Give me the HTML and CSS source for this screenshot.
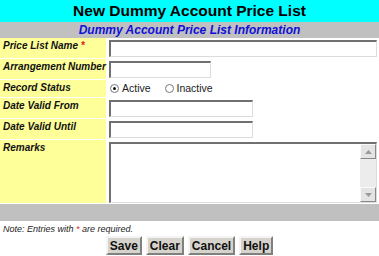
FILE: index.html
```html
<!DOCTYPE html>
<html>
<head>
<meta charset="utf-8">
<link rel="stylesheet" href="styles.css">
</head>
<body>
<div class="page">
  <div class="title">New Dummy Account Price List</div>
  <div class="subtitle">Dummy Account Price List Information</div>
  <table class="form">
    <tr class="r1">
      <th>Price List Name <span class="req">*</span></th>
      <td><input class="txt wide" type="text"></td>
    </tr>
    <tr class="r2">
      <th>Arrangement Number</th>
      <td><input class="txt short" type="text"></td>
    </tr>
    <tr class="r3">
      <th>Record Status</th>
      <td class="radios">
        <span class="radio on"></span><span class="rlabel">Active</span>
        <span class="radio"></span><span class="rlabel">Inactive</span>
      </td>
    </tr>
    <tr class="r4">
      <th>Date Valid From</th>
      <td><input class="txt mid" type="text"></td>
    </tr>
    <tr class="r5">
      <th>Date Valid Until</th>
      <td><input class="txt mid" type="text"></td>
    </tr>
    <tr class="r6">
      <th>Remarks</th>
      <td>
        <div class="area">
          <div class="sb">
            <div class="sbbtn"><svg width="7" height="4" viewBox="0 0 7 4"><path d="M3.5 0 L7 4 L0 4 Z" fill="#9a9a9a"/></svg></div>
            <div class="sbtrack"></div>
            <div class="sbbtn"><svg width="7" height="4" viewBox="0 0 7 4"><path d="M0 0 L7 0 L3.5 4 Z" fill="#9a9a9a"/></svg></div>
          </div>
        </div>
      </td>
    </tr>
  </table>
  <div class="footbar"></div>
  <div class="note">Note: Entries with <span class="req">*</span> are required.</div>
  <div class="buttons">
    <button class="btn">Save</button>
    <button class="btn">Clear</button>
    <button class="btn">Cancel</button>
    <button class="btn">Help</button>
  </div>
</div>
</body>
</html>
```
FILE: styles.css
```css
html, body {
  margin: 0;
  padding: 0;
  background: #fff;
}
.page {
  width: 379px;
  font-family: "Liberation Sans", Arial, sans-serif;
}
.title {
  background: #00ffff;
  height: 22px;
  line-height: 22px;
  text-align: center;
  font-weight: bold;
  font-size: 15.5px;
  color: #000;
}
.subtitle {
  background: #c0c0c0;
  height: 16px;
  line-height: 16px;
  text-align: center;
  font-weight: bold;
  font-style: italic;
  font-size: 12px;
  color: #1010d8;
}
.form {
  width: 100%;
  border-collapse: separate;
  border-spacing: 0 1px;
  margin: -1px 0 0 0;
}
.form th {
  background: #ffff99;
  width: 103px;
  padding: 1px 0 0 3px;
  text-align: left;
  vertical-align: top;
  font-size: 10px;
  font-weight: bold;
  font-style: italic;
  color: #111;
  white-space: nowrap;
  line-height: 14px;
}
.form td {
  padding: 0 0 0 3px;
  vertical-align: top;
}
.req {
  color: #e02020;
}
.r1, .r2 { height: 20px; }
.r3 { height: 17px; }
.r4, .r5 { height: 20px; }
.r6 { height: 62px; }
.txt {
  box-sizing: border-box;
  height: 17px;
  margin: 2px 0 0 0;
  padding: 0;
  border-top: 2px solid #707070;
  border-left: 2px solid #707070;
  border-right: 1px solid #dcdcdc;
  border-bottom: 1px solid #dcdcdc;
  background: #fff;
  display: block;
}
.wide { width: 268px; }
.short { width: 102px; }
.mid { width: 144px; }
.radios {
  font-size: 10.5px;
  color: #222;
  line-height: 17px;
}
.radio {
  display: inline-block;
  box-sizing: border-box;
  width: 9px;
  height: 9px;
  border: 1px solid #777;
  border-radius: 50%;
  vertical-align: -1px;
  margin: 0 3px 0 1px;
  position: relative;
}
.radio.on::after {
  content: "";
  position: absolute;
  left: 2px;
  top: 2px;
  width: 3px;
  height: 3px;
  border-radius: 50%;
  background: #111;
}
.rlabel {
  margin-right: 10px;
}
.area {
  box-sizing: border-box;
  width: 268px;
  height: 61px;
  margin-top: 2px;
  border-top: 2px solid #707070;
  border-left: 2px solid #707070;
  border-right: 1px solid #dcdcdc;
  border-bottom: 1px solid #dcdcdc;
  display: flex;
  justify-content: flex-end;
}
.sb {
  width: 16px;
  display: flex;
  flex-direction: column;
  background: #ececec;
}
.sbbtn {
  height: 15px;
  box-sizing: border-box;
  background: #e4e4e4;
  border: 1px solid #fafafa;
  border-right-color: #888;
  border-bottom-color: #888;
  display: flex;
  align-items: center;
  justify-content: center;
}
.sbtrack {
  flex: 1;
}
.footbar {
  background: #c0c0c0;
  height: 17px;
}
.note {
  font-size: 9px;
  font-style: italic;
  color: #222;
  margin: 2px 0 0 3px;
  line-height: 12px;
}
.buttons {
  display: flex;
  justify-content: center;
  gap: 4px;
  margin-top: 1px;
}
.btn {
  font-family: "Liberation Sans", Arial, sans-serif;
  font-weight: bold;
  font-size: 12px;
  background: #d6d3cc;
  color: #111;
  height: 19px;
  padding: 0 2px;
  border: 2px solid;
  border-color: #f4f4f4 #808080 #808080 #f4f4f4;
  line-height: 14px;
}
```
